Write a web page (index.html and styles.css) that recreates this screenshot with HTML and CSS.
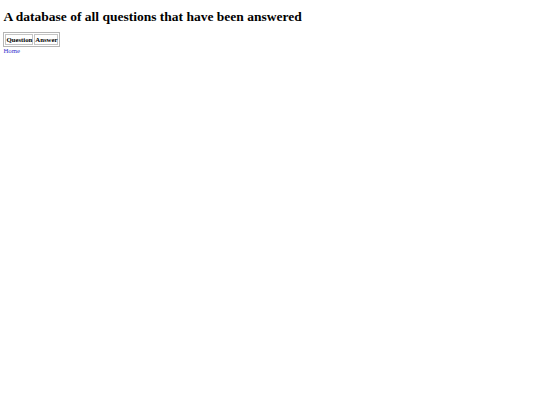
FILE: index.html
```html
<!DOCTYPE html>
<html>
<head>
<meta charset="utf-8">
<link rel="stylesheet" href="styles.css">
</head>
<body>
<h1 class="title">A database of all questions that have been answered</h1>
<table class="qa">
<tr><th class="cell">Question</th><th class="cell">Answer</th></tr>
</table>
<a class="home" href="#">Home</a>
</body>
</html>
```
FILE: styles.css
```css
body {
  margin: 3.4px;
  font-family: "Liberation Serif", serif;
  font-size: 6.75px;
  color: #000;
  background: #fff;
}
.title {
  font-size: 13.5px;
  font-weight: bold;
  margin: 6px 0 7px;
}
.qa {
  border: 1px solid #b5b5b5;
  border-spacing: 1px;
  border-collapse: separate;
}
.cell {
  border: 1px solid #c4c4c4;
  padding: 1px 0;
  font-weight: bold;
}
.home {
  color: #33c;
  text-decoration: underline;
}
```
